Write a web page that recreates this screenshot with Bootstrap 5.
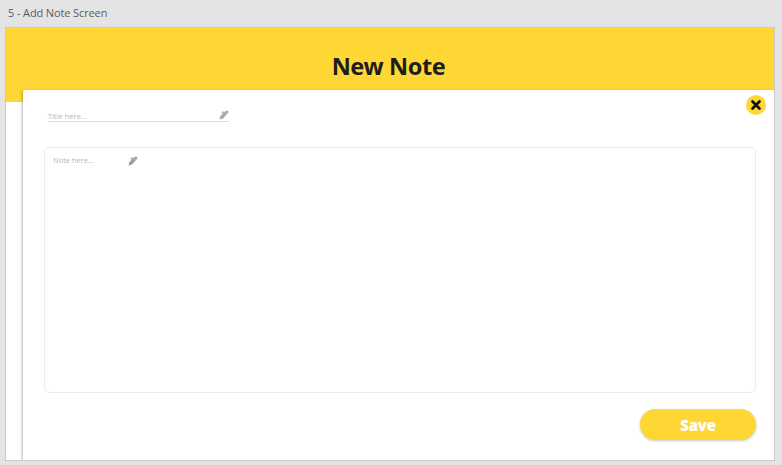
<!DOCTYPE html>
<html lang="en">
<head>
<meta charset="utf-8">
<meta name="viewport" content="width=device-width, initial-scale=1">
<title>Add Note Screen</title>
<link rel="stylesheet" href="https://cdn.jsdelivr.net/npm/bootstrap@5.3.0/dist/css/bootstrap.min.css">
<style>
body { background: #e4e4e4; font-family: "Open Sans", "Noto Sans", sans-serif; height: 465px; }
.artboard-label { height: 27px; padding: 5px 0 0 8px; font-size: 11px; letter-spacing: -.12px; line-height: 15px; color: #5c5c5c; }
.artboard { width: 770px; height: 434px; margin-left: 5px; border: 1px solid #cacaca; background: linear-gradient(#ffd735 74px, #fff 74px); }
.screen-title { height: 62px; padding-top: 21px; font-family: "Noto Sans", sans-serif; font-size: 23.5px; letter-spacing: -.4px; line-height: 34px; color: #1d1d1b; padding-right: 3px; }
.note-panel { height: 370px; margin-left: 17px; border-radius: 2px 2px 0 0; box-shadow: -1px 1px 3px rgba(0,0,0,.28); padding: 5px 18px 0 21px; clip-path: inset(-3px 0 0 -5px); }
.title-field { width: 181px; height: 12px; margin: 15px 0 0 4px; border-bottom: 1px solid #dcdcdc; }
.hint { font-size: 7.5px; line-height: 11px; color: #b8b8b8; }
.title-hint { padding-top: 1px; }
.close-btn { width: 20px; height: 20px; background: #ffd735; margin-right: -10px; }
.note-area { height: 246px; margin-top: 25px; border: 1px solid #ececec; border-radius: 5px; padding: 7px 8px; }
.note-hint { width: 85px; }
.save-btn { width: 116px; height: 31px; margin-top: 16px; background: #ffd735; color: #fff; font-size: 15px; letter-spacing: -.2px; line-height: 20px; font-weight: 800; box-shadow: 0 1px 3px rgba(0,0,0,.22); }
.save-btn:hover { background: #ffd735; color: #fff; }
</style>
<script src="https://cdn.jsdelivr.net/npm/bootstrap@5.3.0/dist/js/bootstrap.bundle.min.js"></script>
</head>
<body class="overflow-hidden">
<svg class="d-none"><symbol id="pen" viewBox="0 0 10 10"><path d="M.6 9.5 1.2 6.2 4.3 3 3.8 2.5 2.6 3.7 2.1 3.2 3.8 1.3 5.4 2 7.2.7Q8.2 0 9 1 9.9 2 9 3L4.1 8.4Z"/><path d="m5.9 2.4 1.8 1.8" fill="none" stroke="#fff" stroke-width=".4"/></symbol></svg>
<div class="artboard-label">5 - Add Note Screen</div>
<main class="artboard">
  <h1 class="screen-title text-center fw-bold m-0">New Note</h1>
  <section class="note-panel bg-white">
    <div class="title-row d-flex justify-content-between align-items-start">
      <div class="title-field d-flex justify-content-between align-items-start">
        <span class="hint title-hint">Title here...</span>
        <svg width="10" height="10" fill="#a8a8a8"><use href="#pen"/></svg>
      </div>
      <button type="button" class="close-btn btn border-0 rounded-circle p-0 d-flex align-items-center justify-content-center" aria-label="Close">
        <svg width="12" height="12" viewBox="0 0 12 12"><path d="m2.5 2.5 7 7m0-7-7 7" stroke="#111" stroke-width="2.7" stroke-linecap="round"/></svg>
      </button>
    </div>
    <div class="note-area">
      <div class="note-hint d-flex justify-content-between align-items-center">
        <span class="hint">Note here...</span>
        <svg width="10" height="10" fill="#a0a0a0"><use href="#pen"/></svg>
      </div>
    </div>
    <div class="d-flex justify-content-end">
      <button type="button" class="save-btn btn border-0 rounded-pill p-0">Save</button>
    </div>
  </section>
</main>
</body>
</html>
